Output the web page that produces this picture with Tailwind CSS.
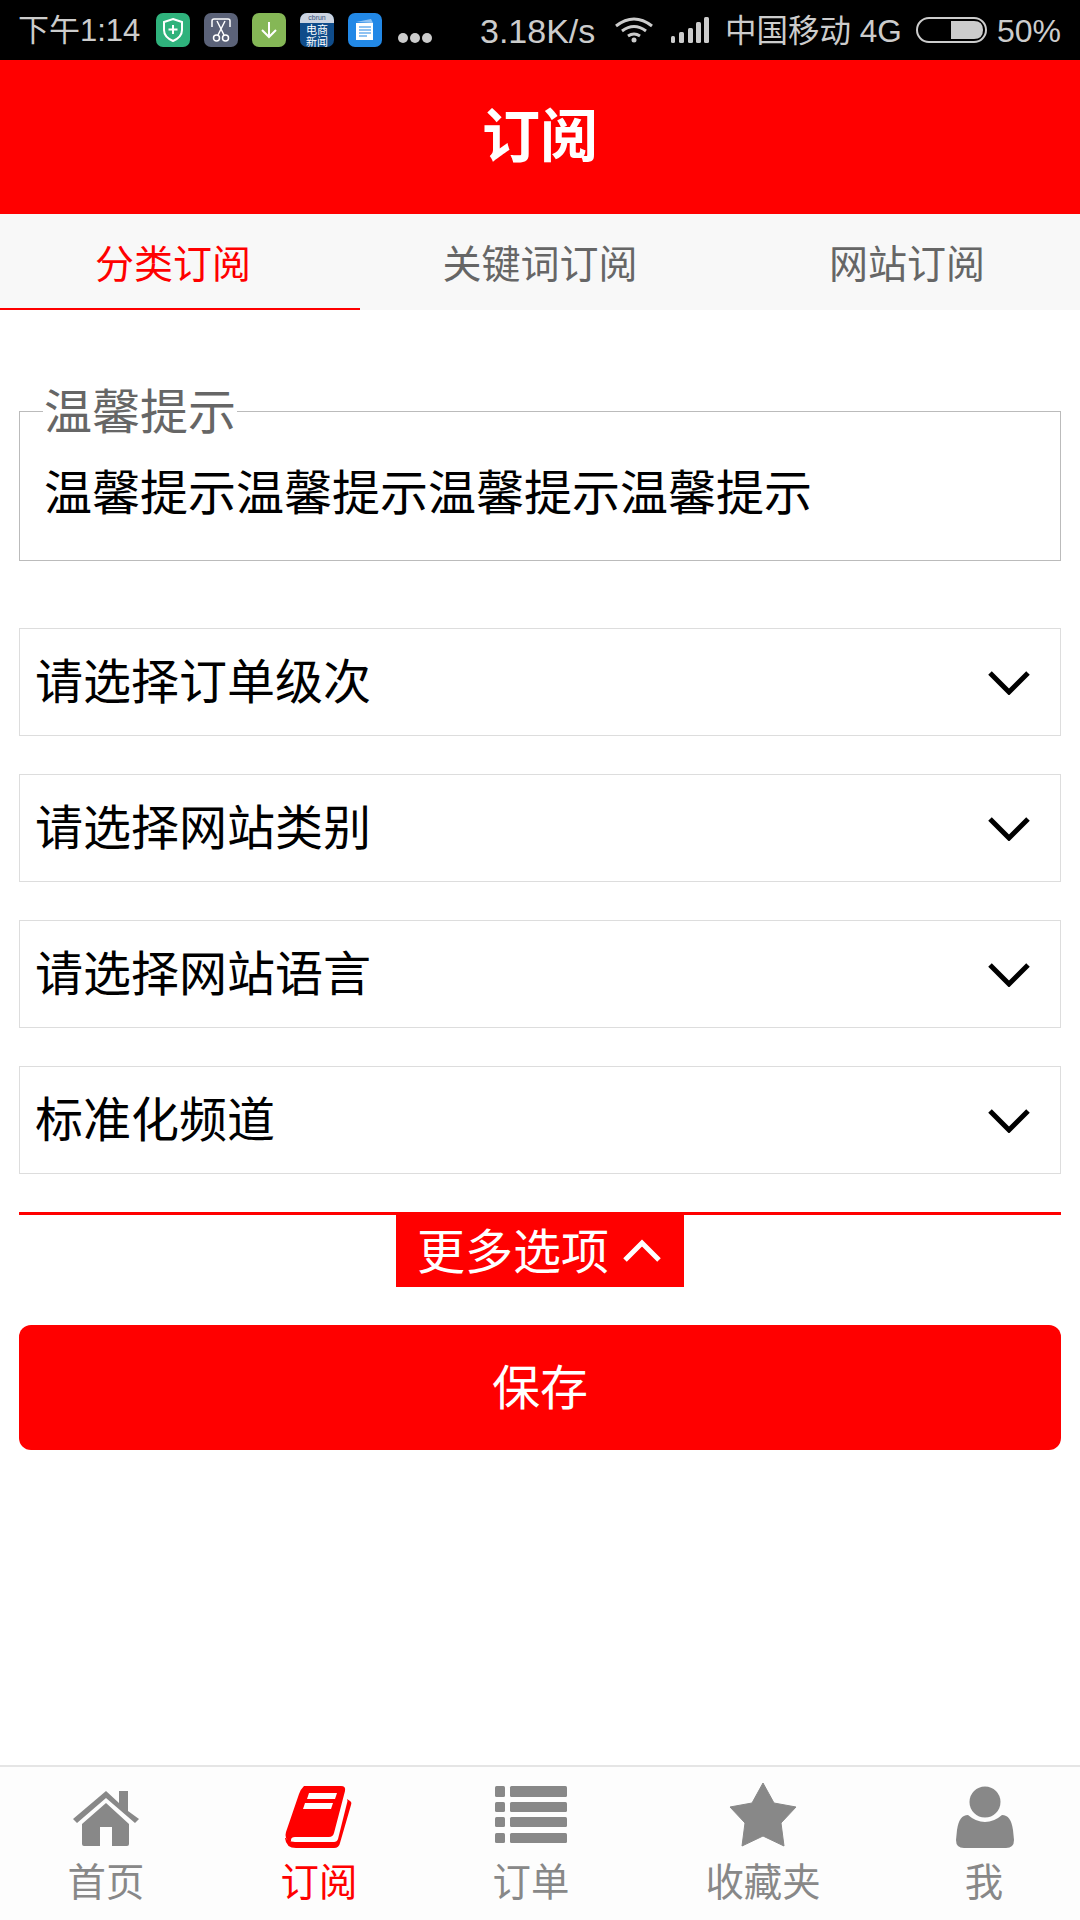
<!DOCTYPE html>
<html lang="zh-CN">
<head>
  <meta charset="UTF-8">
  <meta name="viewport" content="width=device-width, initial-scale=1.0">
  <title>订阅</title>
  <script src="https://cdn.jsdelivr.net/npm/@tailwindcss/browser@4"></script>
</head>
<body class="bg-white font-['Liberation_Sans','Noto_Sans_CJK_SC',sans-serif]">
  <div class="w-[1080px] h-[1920px] flex flex-col overflow-hidden">

    <!-- status bar -->
    <div class="h-[60px] bg-black flex items-center text-[#cccccc] text-[32px] leading-[60px] shrink-0">
      <span class="ml-[18px] w-[138px] text-[31px] whitespace-nowrap pt-[1px]">下午1:14</span>
      <div class="w-[34px] h-[34px] rounded-[7px] bg-[#2fb27c] flex items-center justify-center">
        <svg width="22" height="26" viewBox="0 0 22 26" fill="none" stroke="white" stroke-width="2"><path d="M11 2l9 3v8q0 7-9 11q-9-4-9-11V5z"/><path d="M11 8v9M6.500 12.500h9"/></svg>
      </div>
      <div class="ml-[14px] w-[34px] h-[34px] rounded-[7px] bg-[#5b6278] flex items-center justify-center">
        <svg width="24" height="26" viewBox="0 0 24 26" fill="none" stroke="white" stroke-width="1.500"><path d="M3 10V4q0-2 2-2h14q2 0 2 2v6"/><path d="M8 4l7 14M16 4L9 18"/><circle cx="7.500" cy="21" r="3"/><circle cx="16.500" cy="21" r="3"/></svg>
      </div>
      <div class="ml-[14px] w-[34px] h-[34px] rounded-[7px] bg-[#85b756] flex items-center justify-center">
        <svg width="20" height="20" viewBox="0 0 20 20" fill="none" stroke="white" stroke-width="2"><path d="M10 2v15M3 10l7 7 7-7"/></svg>
      </div>
      <div class="ml-[14px] w-[34px] h-[34px] rounded-[7px] overflow-hidden bg-[#0f4c8a] flex flex-col items-center">
        <div class="w-full h-[10px] bg-[#ccd4e0] text-[#33507a] text-[7px] leading-[10px] text-center">cbrun</div>
        <div class="text-white text-[11px] leading-[12px] text-center font-['Noto_Sans_CJK_SC',sans-serif]">电商<br>新闻</div>
      </div>
      <div class="ml-[14px] w-[34px] h-[34px] rounded-[7px] bg-[#2288e6] flex items-center justify-center">
        <svg width="24" height="24" viewBox="0 0 24 24"><path d="M3 4l15-3 2 4z" fill="#8fc2f3"/><rect x="3" y="5" width="17" height="17" fill="white"/><path d="M6 9h12M6 12h12M6 15h12M6 18h8" stroke="#2288e6" stroke-width="1.200"/></svg>
      </div>
      <div class="ml-[16px] mt-[16px] flex gap-[2px] w-[82px]">
        <span class="w-[10px] h-[10px] rounded-full bg-[#cccccc]"></span>
        <span class="w-[10px] h-[10px] rounded-full bg-[#cccccc]"></span>
        <span class="w-[10px] h-[10px] rounded-full bg-[#cccccc]"></span>
      </div>
      <span class="w-[135px] text-[34px] pt-[1px]">3.18K/s</span>
      <svg width="38" height="26" viewBox="0 0 38 26" fill="none" stroke="#cccccc" stroke-width="3">
        <path d="M1 9q18-14 36 0M7 14q12-9 24 0M13 19q6-4 12 0"/>
        <circle cx="19" cy="23" r="2.500" fill="#cccccc" stroke="none"/>
      </svg>
      <svg class="ml-[18px]" width="38" height="26" viewBox="0 0 38 26" fill="#cccccc">
        <rect x="0" y="19" width="4" height="7" rx="1.500"/><rect x="8" y="15" width="5" height="11" rx="1.500"/><rect x="17" y="11" width="5" height="15" rx="1.500"/><rect x="25" y="5" width="5" height="21" rx="1.500"/><rect x="33" y="0" width="5" height="26" rx="1.500"/>
      </svg>
      <span class="ml-[16px] w-[191px] whitespace-nowrap text-[31.500px] pt-[1px]">中国移动 4G</span>
      <svg width="71" height="26" viewBox="0 0 71 26" fill="none">
        <rect x="1" y="1" width="69" height="24" rx="12" stroke="#cccccc" stroke-width="2"/>
        <path d="M35 4h23q9 0 9 9t-9 9H35z" fill="#cccccc"/>
      </svg>
      <span class="ml-[10px] pt-[1px]">50%</span>
    </div>

    <!-- title -->
    <div class="h-[154px] bg-[#ff0000] text-white text-[58px] font-bold flex items-center justify-center shrink-0 pb-[10px] font-['Noto_Sans_CJK_SC',sans-serif]">订阅</div>

    <!-- tabs -->
    <div class="h-[96px] bg-[#f8f8f8] grid grid-cols-3 text-[39px] text-[#666666] text-center leading-[94px] shrink-0 font-['Noto_Sans_CJK_SC',sans-serif]">
      <div class="text-[#ff0000] border-b-2 border-[#ff0000] pr-[14px]">分类订阅</div>
      <div>关键词订阅</div>
      <div class="pl-[14px]">网站订阅</div>
    </div>

    <!-- form -->
    <div class="flex-1 px-[19px] font-['Noto_Sans_CJK_SC',sans-serif]">
      <fieldset class="mt-[74px] h-[177px] border border-[#bbbbbb] px-[23px]">
        <legend class="px-[1px] pb-[6px] text-[48px] leading-[48px] text-[#666666]">温馨提示</legend>
        <p class="text-[48px] leading-[48px] text-black mt-[27px] ml-[1px]">温馨提示温馨提示温馨提示温馨提示</p>
      </fieldset>

      <div class="mt-[67px] flex flex-col gap-[38px]">
        <div class="h-[108px] border border-[#dddddd] flex items-center justify-between pl-[15px] pr-[30px] text-[48px] text-black">
          <span class="pb-[8px]">请选择订单级次</span>
          <svg class="mt-[2px]" width="42" height="24" viewBox="0 0 42 24" fill="none" stroke="black" stroke-width="5"><path d="M2 2l19 19L40 2"/></svg>
        </div>
        <div class="h-[108px] border border-[#dddddd] flex items-center justify-between pl-[15px] pr-[30px] text-[48px] text-black">
          <span class="pb-[8px]">请选择网站类别</span>
          <svg class="mt-[2px]" width="42" height="24" viewBox="0 0 42 24" fill="none" stroke="black" stroke-width="5"><path d="M2 2l19 19L40 2"/></svg>
        </div>
        <div class="h-[108px] border border-[#dddddd] flex items-center justify-between pl-[15px] pr-[30px] text-[48px] text-black">
          <span class="pb-[8px]">请选择网站语言</span>
          <svg class="mt-[2px]" width="42" height="24" viewBox="0 0 42 24" fill="none" stroke="black" stroke-width="5"><path d="M2 2l19 19L40 2"/></svg>
        </div>
        <div class="h-[108px] border border-[#dddddd] flex items-center justify-between pl-[15px] pr-[30px] text-[48px] text-black">
          <span class="pb-[8px]">标准化频道</span>
          <svg class="mt-[2px]" width="42" height="24" viewBox="0 0 42 24" fill="none" stroke="black" stroke-width="5"><path d="M2 2l19 19L40 2"/></svg>
        </div>
      </div>

      <div class="mt-[38px] border-t-[3px] border-[#ff0000] flex justify-center">
        <div class="w-[288px] h-[72px] bg-[#ff0000] text-white text-[48px] flex items-center pl-[21px] gap-[14px]">
          <span class="pb-[6px] whitespace-nowrap">更多选项</span>
          <svg class="shrink-0" width="38" height="24" viewBox="0 0 38 24" fill="none" stroke="white" stroke-width="5"><path d="M2 21L19 4l17 17"/></svg>
        </div>
      </div>

      <button class="mt-[38px] w-full h-[125px] rounded-[12px] bg-[#ff0000] text-white text-[48px] pb-[8px]">保存</button>
    </div>

    <!-- bottom nav -->
    <div class="h-[155px] shrink-0 border-t-2 border-[#e5e5e5] bg-[#fdfdfd] grid grid-cols-[212px_214px_210px_254px_190px] text-[38.4px] text-[#888888] text-center pt-[15px] font-['Noto_Sans_CJK_SC',sans-serif]">
      <div class="flex flex-col items-center">
        <svg width="66" height="66" viewBox="0 0 66 66" fill="#888888">
          <path d="M0 37L33 9l13 12V9h9v20l11 8-4 4L33 16 4 41z"/>
          <path d="M33 21L56 42v20q0 2-2 2H39V45H27v19H11q-2 0-2-2V42z"/>
        </svg>
        <span class="leading-[50px] mt-[6px]">首页</span>
      </div>
      <div class="flex flex-col items-center text-[#ff0000]">
        <svg width="68" height="66" viewBox="0 0 68 66" fill="#ff0000">
          <path d="M19 4H56q5 0 4 5L49 51q-1 4-5 4H10q-4 0-4 3v1q0 0 0 0H3L1 56q-1-3 0-6L14 12q1-4 5-8z"/>
          <path d="M1 56q1 3 9 4H49q3 0 4-3L62 21q1-2 0-4l3 2q2 1 1 4L55 61q-1 5-6 5H11Q1 66 0 56z"/>
          <path d="M24 11h28l-2 6H22zM20 21h28l-2 6H18z" fill="white"/>
        </svg>
        <span class="leading-[50px] mt-[6px]">订阅</span>
      </div>
      <div class="flex flex-col items-center">
        <svg width="72" height="66" viewBox="0 0 72 66" fill="#888888">
          <rect x="0" y="4" width="10" height="11" rx="1.500"/><rect x="15" y="4" width="57" height="11" rx="1.500"/>
          <rect x="0" y="20" width="10" height="10" rx="1.500"/><rect x="15" y="20" width="57" height="10" rx="1.500"/>
          <rect x="0" y="35" width="10" height="10" rx="1.500"/><rect x="15" y="35" width="57" height="10" rx="1.500"/>
          <rect x="0" y="51" width="10" height="10" rx="1.500"/><rect x="15" y="51" width="57" height="10" rx="1.500"/>
        </svg>
        <span class="leading-[50px] mt-[6px]">订单</span>
      </div>
      <div class="flex flex-col items-center">
        <svg width="68" height="66" viewBox="0 0 68 66" fill="#888888" stroke="#888888" stroke-width="1" stroke-linejoin="round">
          <path d="M34 1L45 21L67 25L52 41L55 64L34 54L13 64L16 41L1 25L23 21z"/>
        </svg>
        <span class="leading-[50px] mt-[6px]">收藏夹</span>
      </div>
      <div class="flex flex-col items-center">
        <svg width="58" height="66" viewBox="0 0 58 66" fill="#888888">
          <ellipse cx="29" cy="20" rx="15.500" ry="15.500"/>
          <path d="M12 33Q20 40 29 40Q38 40 46 33Q55 33 57 48L58 58Q58 66 50 66H8Q0 66 0 58L1 48Q3 33 12 33z"/>
        </svg>
        <span class="leading-[50px] mt-[6px] pr-[2px]">我</span>
      </div>
    </div>
  </div>
</body>
</html>
